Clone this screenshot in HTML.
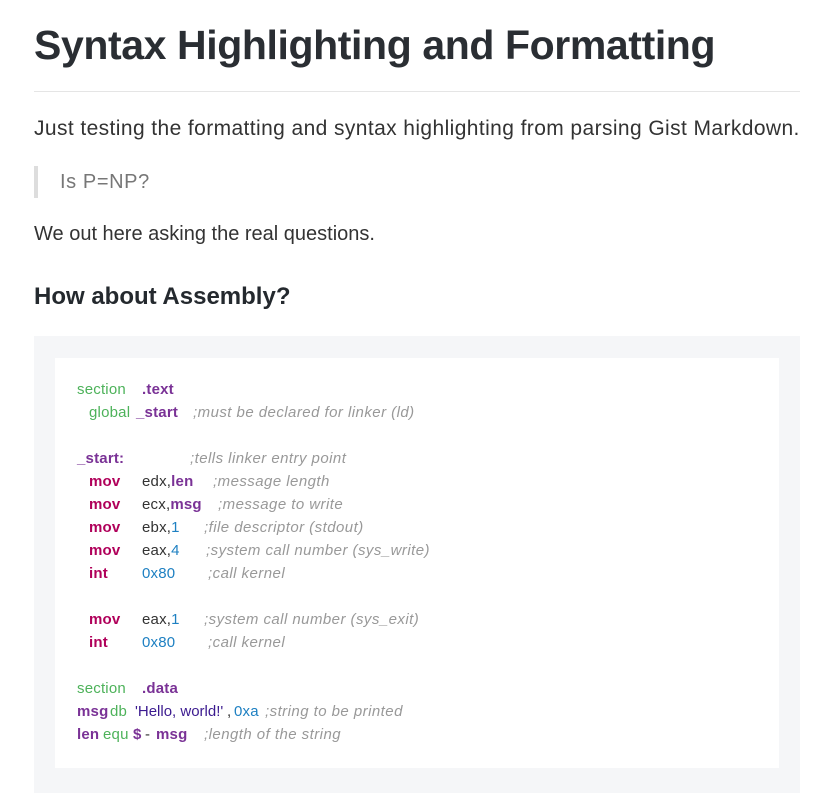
<!DOCTYPE html>
<html><head><meta charset="utf-8"><style>
body{margin:0;width:822px;height:793px;overflow:hidden;background:#fff;font-family:"Liberation Sans",sans-serif;color:#24292e;position:relative}
.a{position:absolute;white-space:nowrap}
h1{position:absolute;left:34px;top:22px;margin:0;font-size:41px;font-weight:bold;letter-spacing:-0.4px;color:#2a2e33}
.hr{position:absolute;left:34px;top:91px;width:766px;height:1px;background:#e5e5e5}
.p{font-size:20px;color:#333}
.bq{position:absolute;left:34px;top:166px;width:4px;height:32px;background:#ddd}
.outer{position:absolute;left:34px;top:336px;width:766px;height:457px;background:#f5f6f8}
.inner{position:absolute;left:55px;top:358px;width:724px;height:410px;background:#fff}
.c{position:absolute;font-size:15px;letter-spacing:0.2px;white-space:nowrap;line-height:18px;color:#333}
.g{color:#4db25a}.pu{color:#7a3296;font-weight:bold}.k{color:#b0005a;font-weight:bold}.b{color:#1e80c2}.s{color:#3b1a8f}.cm{color:#999;font-style:italic;letter-spacing:0.45px}
</style></head><body>
<h1>Syntax Highlighting and Formatting</h1>
<div class="hr"></div>
<div class="a p" style="left:34px;top:117px;letter-spacing:0.4px;font-size:21px">Just testing the formatting and syntax highlighting from parsing Gist Markdown.</div>
<div class="bq"></div>
<div class="a p" style="left:60px;top:171px;color:#777;letter-spacing:0.6px">Is P=NP?</div>
<div class="a p" style="left:34px;top:223px">We out here asking the real questions.</div>
<div class="a" style="left:34px;top:283px;font-size:24px;font-weight:bold;color:#24292e">How about Assembly?</div>
<div class="outer"></div><div class="inner"></div>

<span class="c g" style="left:77px;top:381px">section</span><span class="c pu" style="left:142px;top:381px">.text</span>
<span class="c g" style="left:89px;top:404px">global</span><span class="c pu" style="left:136px;top:404px">_start</span><span class="c cm" style="left:193px;top:404px">;must be declared for linker (ld)</span>

<span class="c pu" style="left:77px;top:450px">_start:</span><span class="c cm" style="left:190px;top:450px">;tells linker entry point</span>
<span class="c k" style="left:89px;top:473px">mov</span><span class="c" style="left:142px;top:473px">edx,<b class="pu">len</b></span><span class="c cm" style="left:213px;top:473px">;message length</span>
<span class="c k" style="left:89px;top:496px">mov</span><span class="c" style="left:142px;top:496px">ecx,<b class="pu">msg</b></span><span class="c cm" style="left:218px;top:496px">;message to write</span>
<span class="c k" style="left:89px;top:519px">mov</span><span class="c" style="left:142px;top:519px">ebx,<span class="b">1</span></span><span class="c cm" style="left:204px;top:519px">;file descriptor (stdout)</span>
<span class="c k" style="left:89px;top:542px">mov</span><span class="c" style="left:142px;top:542px">eax,<span class="b">4</span></span><span class="c cm" style="left:206px;top:542px">;system call number (sys_write)</span>
<span class="c k" style="left:89px;top:565px">int</span><span class="c b" style="left:142px;top:565px">0x80</span><span class="c cm" style="left:208px;top:565px">;call kernel</span>

<span class="c k" style="left:89px;top:611px">mov</span><span class="c" style="left:142px;top:611px">eax,<span class="b">1</span></span><span class="c cm" style="left:204px;top:611px">;system call number (sys_exit)</span>
<span class="c k" style="left:89px;top:634px">int</span><span class="c b" style="left:142px;top:634px">0x80</span><span class="c cm" style="left:208px;top:634px">;call kernel</span>

<span class="c g" style="left:77px;top:680px">section</span><span class="c pu" style="left:142px;top:680px">.data</span>
<span class="c pu" style="left:77px;top:703px">msg</span><span class="c g" style="left:110px;top:703px">db</span><span class="c s" style="left:135px;top:703px;letter-spacing:0">'Hello, world!'</span><span class="c" style="left:227px;top:703px">,</span><span class="c b" style="left:234px;top:703px">0xa</span><span class="c cm" style="left:265px;top:703px">;string to be printed</span>
<span class="c pu" style="left:77px;top:726px">len</span><span class="c g" style="left:103px;top:726px">equ</span><span class="c pu" style="left:133px;top:726px">$</span><span class="c" style="left:145px;top:726px">-</span><span class="c pu" style="left:156px;top:726px">msg</span><span class="c cm" style="left:204px;top:726px">;length of the string</span>
</body></html>
